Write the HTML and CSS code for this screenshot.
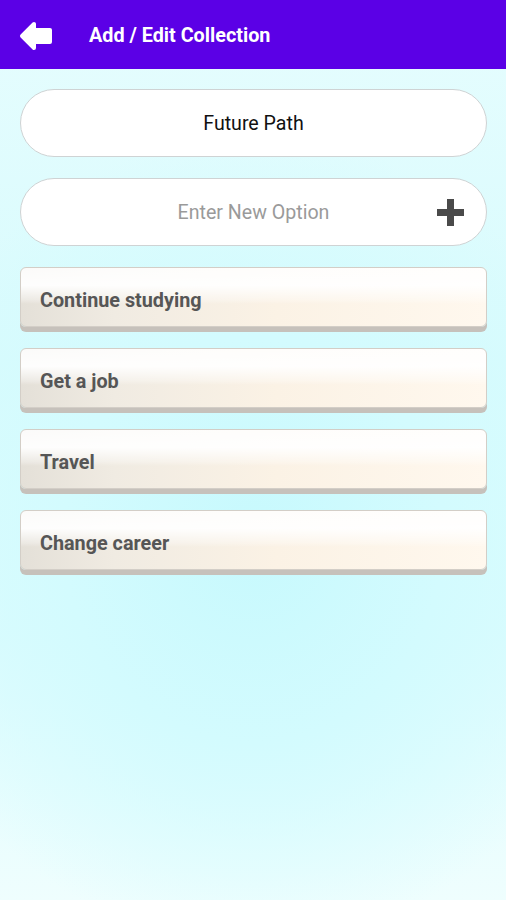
FILE: index.html
```html
<!DOCTYPE html>
<html lang="en">
<head>
  <meta charset="UTF-8">
  <title>Add / Edit Collection</title>
  <link rel="stylesheet" href="styles.css">
</head>
<body>

  <header class="topbar">
    <button class="back" aria-label="Back">
      <svg width="34" height="30" viewBox="0 0 34 30">
        <path d="M3 15 L15 3 L15 9 L31 9 L31 21 L15 21 L15 27 Z" fill="#fff" stroke="#fff" stroke-width="4" stroke-linejoin="round"/>
      </svg>
    </button>
    <h1>Add / Edit Collection</h1>
  </header>

  <main class="content">
    <div class="pill">
      <input class="pill-input" type="text" value="Future Path">
    </div>

    <div class="pill new-option">
      <input class="pill-input" type="text" placeholder="Enter New Option">
      <button class="add" aria-label="Add option">
        <svg width="29" height="29" viewBox="0 0 29 29">
          <path d="M14.5 1 V28 M1 14.5 H28" stroke="#4a4a4a" stroke-width="7"/>
        </svg>
      </button>
    </div>

    <ul class="options">
      <li class="option">Continue studying</li>
      <li class="option">Get a job</li>
      <li class="option">Travel</li>
      <li class="option">Change career</li>
    </ul>
  </main>

</body>
</html>
```

FILE: styles.css
```css
body {
  margin: 0;
  min-height: 100vh;
  font-family: Roboto, 'Liberation Sans', sans-serif;
  background:
    radial-gradient(ellipse 75% 45% at 50% 60%, #c7f9fd 0%, #d3fbfe 50%, rgba(235, 254, 255, 0) 100%),
    linear-gradient(to bottom, #e6fdfe 0%, #d8fbfd 40%, #dcfcfe 70%, #effefe 100%);
}
.topbar {
  height: 69px;
  background: #5b00e6;
  display: flex;
  align-items: center;
  padding: 2px 0 0 19px;
  box-sizing: border-box;
}
.back {
  background: none;
  border: none;
  padding: 0;
  width: 36px;
  height: 30px;
  display: flex;
  align-items: center;
  cursor: pointer;
}
.topbar h1 {
  margin: 0 0 0 34px;
  color: #fff;
  font-size: 19.8px;
  font-weight: 700;
}
.content {
  padding: 20px 19px 20px 20px;
  display: flex;
  flex-direction: column;
  gap: 21px;
}
.pill {
  height: 68px;
  border: 1px solid #cfd3d4;
  border-radius: 34px;
  background: #fff;
  box-sizing: border-box;
  display: grid;
  grid-template-columns: 48px 1fr 48px;
  align-items: center;
}
.pill-input {
  grid-column: 2;
  border: none;
  outline: none;
  background: none;
  text-align: center;
  font-family: inherit;
  font-size: 19.6px;
  color: #111;
  padding: 0;
  min-width: 0;
}
.pill-input::placeholder {
  color: #9a9a9a;
}
.add {
  background: none;
  border: none;
  padding: 0;
  width: 29px;
  height: 29px;
  margin-left: -2px;
  cursor: pointer;
}
.options {
  list-style: none;
  margin: 0;
  padding: 0;
  display: flex;
  flex-direction: column;
  gap: 21px;
}
.option {
  height: 60px;
  box-sizing: border-box;
  border: 1px solid #d3cec7;
  border-radius: 6px;
  padding: 6px 19px 0;
  display: flex;
  align-items: center;
  font-size: 19.8px;
  font-weight: 700;
  color: #565656;
  background:
    linear-gradient(to bottom, rgba(255, 255, 255, 0.85) 0%, rgba(255, 255, 255, 0.95) 30%, rgba(255, 255, 255, 0.3) 55%, rgba(255, 255, 255, 0) 62%),
    linear-gradient(to right, #e4e0d8 0%, #f0ebe2 20%, #fbf2e5 55%, #fff8ee 100%);
  box-shadow: 0 5px 0 #c6c1bb;
}
```
